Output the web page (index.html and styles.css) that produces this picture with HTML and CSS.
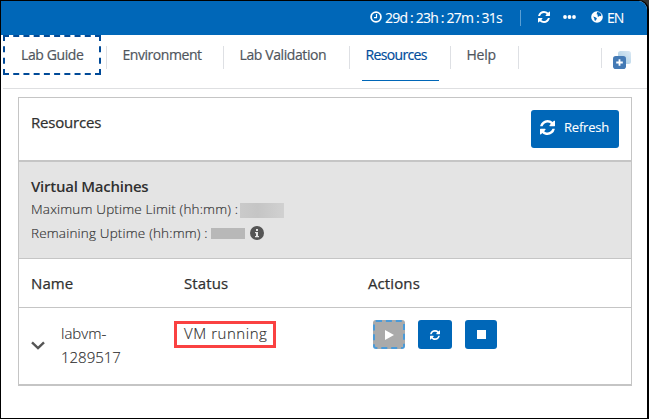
FILE: index.html
```html
<!DOCTYPE html>
<html lang="en">
<head>
<meta charset="utf-8">
<title>Lab Resources</title>
<link rel="stylesheet" href="styles.css">
</head>
<body>
<svg class="defs" width="0" height="0">
  <symbol id="refresh" viewBox="0 128 1536 1536"><path d="M1511 1056q0 5-1 7-64 268-268 434.500T764 1664q-146 0-282.500-55T238 1452l-129 129q-19 19-45 19t-45-19-19-45v-448q0-26 19-45t45-19h448q26 0 45 19t19 45-19 45l-137 137q71 66 161 102t187 36q134 0 250-65t186-179q11-17 53-117 8-23 30-23h192q13 0 22.500 9.500t9.500 22.500zm25-800v448q0 26-19 45t-45 19h-448q-26 0-45-19t-19-45 19-45l138-138Q969 384 768 384q-134 0-250 65T332 628q-11 17-53 117-8 23-30 23H50q-13 0-22.500-9.500T18 736v-7q65-268 270-434.500T768 128q146 0 284 55.500T1297 340l130-129q19-19 45-19t45 19 19 45z"/></symbol>
</svg>
<div class="window">
  <header class="topbar">
    <svg class="clock" viewBox="0 0 12 12"><circle cx="6" cy="6" r="4.900"/><path d="M6.500 3v3.700H4"/></svg>
    <span class="timer">29d : 23h : 27m : 31s</span>
    <span class="bar-sep"></span>
    <svg class="sync"><use href="#refresh"/></svg>
    <svg class="dots" viewBox="0 0 13 4"><circle cx="2" cy="2" r="1.900"/><circle cx="6.500" cy="2" r="1.900"/><circle cx="11" cy="2" r="1.900"/></svg>
    <svg class="globe" viewBox="0 0 12 12"><circle cx="6" cy="6" r="5.800"/><path d="M6.200 1l2.500.6 1.700 2-.3 1.700-1.500-.5-.8 1-1.400-.6.500-1.500-1.300-.5zM2.200 5.500l1.500.5 1.600.8.700 1.200-1.100.8-.4 1.300-1-.9-.2-1.600z"/></svg>
    <span class="lang">EN</span>
  </header>
  <nav class="tabs">
    <a class="tab guide"><span>Lab Guide</span></a>
    <a class="tab environment"><span>Environment</span></a>
    <a class="tab validation"><span>Lab Validation</span></a>
    <a class="tab resources"><span>Resources</span></a>
    <a class="tab help"><span>Help</span></a>
    <div class="split">
      <svg viewBox="0 0 18 18"><defs><linearGradient id="pane" x1="0" y1="1" x2="1" y2="0"><stop offset="0" stop-color="#a5cae2"/><stop offset="1" stop-color="#dceaf5"/></linearGradient></defs><rect x="5" width="13" height="13" rx="2.500" fill="url(#pane)"/><rect y="5" width="13" height="13" rx="2.800" fill="#447ab5"/><path d="M6.500 8.200v6.600M3.200 11.500h6.600" stroke="#fff" stroke-width="1.800"/></svg>
    </div>
  </nav>
  <main class="panel">
    <section class="panel-head">
      <h1>Resources</h1>
      <button class="refresh"><svg><use href="#refresh"/></svg><span>Refresh</span></button>
    </section>
    <section class="summary">
      <h2>Virtual Machines</h2>
      <p><span class="max">Maximum Uptime Limit (hh:mm) :</span><i class="mask"></i></p>
      <p><span class="remaining">Remaining Uptime (hh:mm) :</span><i class="mask dark"></i><svg class="info" viewBox="0 0 14 14"><circle cx="7" cy="7" r="7" fill="#555"/><path d="M6 3h2v2H6zM5 6h3v4h1v1.200H5V10h1V7.200H5z" fill="#e6e6e6"/></svg></p>
    </section>
    <div class="row columns"><b class="c-name">Name</b><b class="c-status">Status</b><b class="c-actions">Actions</b></div>
    <div class="row machine">
      <div class="name"><svg viewBox="0 0 14 9"><path d="M1 1.300l6 5.700 6-5.700"/></svg><span>labvm-<br>1289517</span></div>
      <div class="status"><span>VM running</span></div>
      <div class="actions">
        <button class="start"><svg viewBox="0 0 9 10"><path d="M0 0l9 5-9 5z"/></svg></button>
        <button class="restart"><svg><use href="#refresh"/></svg></button>
        <button class="stop"><svg viewBox="0 0 9 9"><path d="M0 0h9v9H0z"/></svg></button>
      </div>
    </div>
  </main>
</div>
</body>
</html>
```

FILE: styles.css
```css
* { box-sizing: border-box; }
body { margin: 0; background: #333; font-family: "Open Sans", "Noto Sans", sans-serif; color: #303030; }
svg { display: block; flex: none; fill: currentColor; }
.defs { position: absolute; }
span, b, h1, h2 { white-space: nowrap; }
button { border: 0; padding: 0; color: #fff; background: #0067b8; font: inherit; display: flex; align-items: center; border-radius: 3px; }
.window { width: 649px; height: 419px; border: 1px solid #000; border-right-width: 2px; background: #fff; border-top-right-radius: 10px; overflow: hidden; }

.topbar { height: 34px; background: #0067b8; color: #fff; display: flex; align-items: center; padding: 0 0 2px 369px; font-size: 14px; }
.clock { width: 12px; height: 12px; fill: none; stroke: #fff; stroke-width: 1.8; }
.clock path { stroke-width: 1.2; }
.timer { width: 118px; margin-left: 3px; letter-spacing: -0.8px; -webkit-text-stroke: 0.1px; }
.bar-sep { width: 1px; height: 16px; margin: 2px 0 0 17px; background: #5a9fd4; }
.sync { width: 12px; height: 12px; margin-left: 17px; }
.dots { width: 13px; height: 4px; margin-left: 13px; }
.globe { width: 12px; height: 12px; margin-left: 15px; }
.globe path { fill: #0067b8; }
.lang { margin-left: 4px; letter-spacing: -1px; -webkit-text-stroke: 0.1px; }

.tabs { height: 54px; margin-left: 2px; border-bottom: 1px solid #dedfe1; display: flex; font-size: 14px; font-weight: 500; color: #50565d; -webkit-text-stroke: 0.2px; }
.tab { height: 40px; line-height: 40px; padding-left: 17px; display: block; }
.tab + .tab { background: linear-gradient(#dee0e4, #dee0e4) 0 11px / 1px 23px no-repeat; }
.guide { width: 98px; padding-left: 16px; border: 2px dashed #004a98; line-height: 36px; letter-spacing: -0.4px; margin-right: 5px; }
.environment { width: 117px; padding-left: 16.5px; letter-spacing: -0.45px; }
.validation { width: 126px; padding-left: 16.5px; letter-spacing: -0.4px; }
.resources { width: 101px; height: 47px; color: #004c9b; letter-spacing: -0.65px; }
.resources span { display: block; width: 77px; height: 46px; margin-left: -4px; padding-left: 3.5px; border-bottom: 1px solid #0067b8; }
.help { width: 69px; padding-left: 16.5px; letter-spacing: -0.2px; background: linear-gradient(#dee0e4, #dee0e4) 0 11px / 1px 23px no-repeat, linear-gradient(#dee0e4, #dee0e4) 100% 11px / 1px 23px no-repeat !important; }
.split { margin: 13px 0 0 82px; height: 20px; border-left: 1px solid #dee0e4; padding: 3px 0 0 11px; }
.split svg { width: 18px; height: 18px; }

.panel { margin: 8px 0 0 17px; width: 614px; height: 289px; border: 1px solid #c5c5c5; border-bottom-width: 2px; }
.panel-head { height: 64px; border-bottom: 2px solid #c5c5c5; display: flex; justify-content: space-between; padding: 12px 12px 0; }
h1, h2, b { margin: 0; font-size: 15px; font-weight: 500; }
h1, b { -webkit-text-stroke: 0.25px; }
h1 { line-height: 24px; letter-spacing: -0.2px; }
.refresh { width: 88px; height: 38px; padding: 0 0 4px 9px; font-size: 13px; letter-spacing: -0.2px; -webkit-text-stroke: 0.1px; }
.refresh svg { width: 15px; height: 15px; margin-right: 9px; }
.summary { height: 97px; border-bottom: 1px solid #c5c5c5; background: #e4e4e4; padding: 12px 0 0 12px; }
h2 { font-weight: 600; line-height: 24px; letter-spacing: -0.25px; }
p { margin: 0; height: 24px; line-height: 22px; font-size: 13.5px; font-weight: 300; letter-spacing: 0.17px; color: #303030; -webkit-text-stroke: 0.15px; display: flex; }
.max { width: 209px; }
.remaining { width: 180px; }
.mask { width: 44px; height: 15px; margin-top: 5px; background: linear-gradient(90deg, #cacaca, #c5c5c5 40%, #d1d1d1); }
.dark { width: 34px; height: 11px; background: #b8b8b8; margin-top: 6px; }
.info { width: 14px; height: 14px; margin: 4px 0 0 5px; stroke: none; }
.row { display: grid; grid-template-columns: 153px 183px 1fr; padding-left: 12px; }
.columns { height: 49px; line-height: 48px; border-bottom: 1px solid #c5c5c5; letter-spacing: 0.1px; }
.c-actions { padding-left: 1px; }
.machine { color: #303030; font-size: 15px; font-weight: 300; line-height: 24px; padding-top: 12px; -webkit-text-stroke: 0.15px; }
.name { display: flex; }
.name svg { width: 14px; height: 9px; margin: 21px 16px 0 0; fill: none; stroke: #555; stroke-width: 2.4; }
.name span { padding-top: 1px; }
.status span { display: block; margin: 1px 0 0 -10px; width: 102px; height: 27px; border: 3px solid #fa4141; padding-left: 7px; line-height: 18px; letter-spacing: 0.55px; }
.actions { display: flex; padding-left: 6px; }
.actions button { height: 29px; justify-content: center; }
.start { width: 32px; margin-right: 13px; background: #aaa; border: 2px dashed #4a9ad8; }
.start svg { width: 9px; height: 10px; }
.restart { width: 34px; margin-right: 13px; }
.restart svg { width: 10px; height: 10px; }
.stop { width: 32px; }
.stop svg { width: 9px; height: 9px; }
```
